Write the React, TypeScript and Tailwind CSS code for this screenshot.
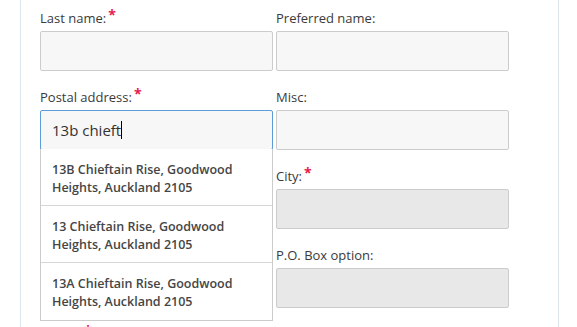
import React from "react";

function Label({ text, req }: { text: string; req?: boolean }) {
  return (
    <div className="h-[39px] pt-[17px] text-[13px] leading-[18px] text-[#3a3a3a] flex items-start">
      <span>{text}</span>
      {req && <span className="text-[#e8194f] text-[14px] leading-[12px] ml-[2px] font-bold">*</span>}
    </div>
  );
}

function Field({ text, req, disabled }: { text: string; req?: boolean; disabled?: boolean }) {
  return (
    <div className="flex flex-col">
      <Label text={text} req={req} />
      <div
        className={`h-[40px] rounded-[2px] border border-[#cccccc] ${disabled ? "bg-[#e8e8e8]" : "bg-[#f7f7f7]"}`}
      />
    </div>
  );
}

const items = [
  ["13B Chieftain Rise, Goodwood", "Heights, Auckland 2105"],
  ["13 Chieftain Rise, Goodwood", "Heights, Auckland 2105"],
  ["13A Chieftain Rise, Goodwood", "Heights, Auckland 2105"],
];

export default function App() {
  return (
    <div
      className="w-[577px] h-[327px] overflow-hidden bg-white"
      style={{ fontFamily: '"Open Sans", sans-serif' }}
    >
      <div className="ml-[20px] w-[539px] h-[400px] border-x border-[#dde6ec] pl-[19px] -mt-[8px]">
        <div className="grid grid-cols-[233px_233px] gap-x-[3px]">
          <div className="flex flex-col">
            <Field text="Last name:" req />
            <div className="flex flex-col relative">
              <Label text="Postal address:" req />
              <div className="h-[40px] rounded-[2px] border border-[#5b9dd9] bg-[#f7f7f7] flex items-center pl-[11px] text-[15px] text-[#333]">
                <span>13b chieft</span>
                <span className="inline-block w-[1px] h-[18px] bg-black" />
              </div>
              <div className="absolute top-[78px] left-0 w-[233px] bg-white border border-[#cccccc] border-t-0 z-10">
                {items.map((it, i) => (
                  <div
                    key={i}
                    className={`h-[57px] pl-[11px] pt-[12px] text-[12.5px] leading-[18px] font-semibold text-[#454545] ${i < 2 ? "border-b border-[#d6d6d6]" : ""}`}
                  >
                    <div>{it[0]}</div>
                    <div>{it[1]}</div>
                  </div>
                ))}
              </div>
            </div>
            <Field text="Suburb:" />
            <Field text="Postcode:" />
            <Field text="Phone:" req />
          </div>
          <div className="flex flex-col">
            <Field text="Preferred name:" />
            <Field text="Misc:" />
            <Field text="City:" req disabled />
            <Field text="P.O. Box option:" disabled />
          </div>
        </div>
      </div>
    </div>
  );
}
